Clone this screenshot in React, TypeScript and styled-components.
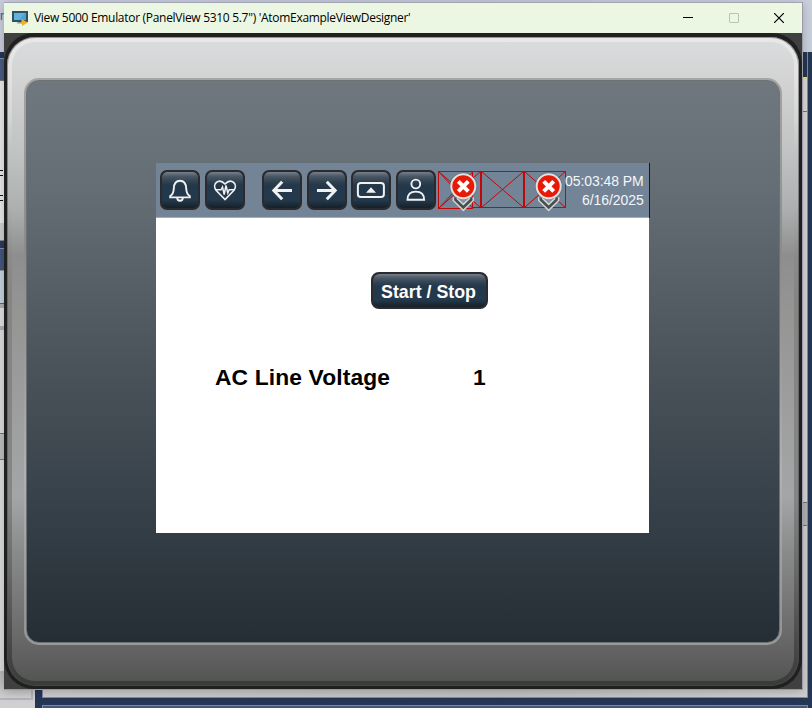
import React from "react";
import styled, { createGlobalStyle } from "styled-components";

const GlobalStyle = createGlobalStyle`
  * { box-sizing: border-box; }
  html, body { margin: 0; padding: 0; overflow: hidden; }
`;

const Desktop = styled.div`
  position: relative;
  width: 812px;
  height: 708px;
  overflow: hidden;
  display: flex;
  flex-direction: column;
  background: #253754;
`;

const TopBand = styled.div`
  flex: 0 0 52px;
  background: linear-gradient(90deg, #c9cddd, #c4c9dc 60%, #cbd0dd);
  color: #2a63a0;
  font: 12px/32px "Liberation Sans", sans-serif;
`;

const Workspace = styled.div`
  flex: 1;
  display: flex;
  min-height: 0;
`;

const LeftRail = styled.div`
  flex: 0 0 35px;
  display: flex;
  flex-direction: column;
  background: #d0d0d1;
`;

const Segment = styled.div<{ $h: number; $bg: string; $line?: string }>`
  flex: 0 0 ${(p) => p.$h}px;
  background: ${(p) => p.$bg};
  border-top: ${(p) => (p.$line ? `1px solid ${p.$line}` : "0")};
  overflow: hidden;
`;

const Stub = styled.div<{ $mt: number }>`
  width: 3px;
  height: 6px;
  margin-top: ${(p) => p.$mt}px;
  border-top: 1px solid #111;
  border-bottom: 1px solid #111;
`;

const RailBox = styled.div`
  flex: 0 0 29px;
  width: 33px;
  border: 1px solid #b5b5bf;
  border-width: 2px 2px 2px 0;
  background: linear-gradient(#b8b8b8, #d0d0d0);
`;

const Editor = styled.div`
  flex: 1;
  display: flex;
  flex-direction: column;
  padding: 0 0 0 7px;
  background: #253754;
`;

const EditorRow = styled.div`
  flex: 0 0 646px;
  display: flex;
  justify-content: flex-end;
  border-bottom: 1px solid #7c8aa8;
  border-left: 1px solid #7c8aa8;
  background: linear-gradient(90deg, #cfcfcf, #c4c4c4 60%, #d2d2d2);
  margin-right: 4px;
`;

const EditorEdge = styled.div`
  width: 6px;
  display: flex;
  flex-direction: column;
  border-right: 1px solid #7f8ba6;
`;

const Footer = styled.div`
  flex: 1;
  margin: 7px 4px 0 0;
  border: 1px solid #7788a8;
  border-bottom: 0;
  background: #44577c;
`;

const Window = styled.main`
  position: absolute;
  left: 4px;
  top: 2px;
  width: 799px;
  height: 688px;
  display: flex;
  flex-direction: column;
  border-top: 1px solid #a2a5b2;
  border-right: 1px solid #9c9da8;
  border-bottom: 1px solid #999;
  box-shadow: 0 2px 10px rgba(0, 0, 0, 0.22);
`;

const TitleBar = styled.header`
  flex: 0 0 30px;
  display: flex;
  align-items: center;
  padding-left: 8px;
  background: #ebf7e3;
`;

const Title = styled.h1`
  flex: 1;
  margin: 0 0 0 6px;
  font: 400 12px/30px "Open Sans", "Noto Sans", sans-serif;
  letter-spacing: -0.3px;
  white-space: nowrap;
  color: #000;
`;

const WindowControls = styled.div`
  display: flex;
  height: 30px;
`;

const ControlButton = styled.button<{ $muted?: boolean }>`
  width: 45.5px;
  height: 29px;
  padding: 0;
  border: 0;
  background: none;
  color: ${(p) => (p.$muted ? "#b9c4b4" : "#000")};
  display: grid;
  place-items: center;
`;

const Frame = styled.div`
  flex: 1;
  display: flex;
  background: #404040;
`;

const Housing = styled.div`
  flex: 1;
  display: flex;
  padding: 4px 3px 3px;
  border-radius: 30px;
  background: #202020;
`;

const Rim = styled.div`
  flex: 1;
  display: flex;
  padding: 5px 5px 5px 5px;
  border-radius: 28px;
  box-shadow: inset 0 0 0 1px rgba(80, 80, 80, 0.55);
  background: linear-gradient(
    #e8e8e8 0,
    #e2e2e2 40px,
    #d4d5d5 80px,
    #c2c3c3 113px,
    #afb0b0 168px,
    #8b8b8b 218px,
    #858585 260px,
    #848484 360px,
    #858585 460px,
    #666 540px,
    #444 620px,
    #393b39 100%
  );
`;

const Bezel = styled.div`
  flex: 1;
  display: flex;
  padding: 36px 12px;
  border-radius: 23px;
  background: linear-gradient(
    #dadbdd 0,
    #d2d3d2 38px,
    #c1c3c4 108px,
    #adaeb0 168px,
    #8d8e8d 214px,
    #959694 270px,
    #9c9d9c 360px,
    #a4a5a7 454px,
    #898b8a 510px,
    #6b6b6b 590px,
    #535553 100%
  );
`;

const Recess = styled.div`
  flex: 1;
  display: flex;
  padding: 2px;
  border-radius: 15px;
  background: linear-gradient(#a5a5a3, #9a9b9b 12%, #8a8b8c 30%, #969798 45%, #b0b1b1 70%, #939494 95%, #999b99);
`;

const Glass = styled.div`
  flex: 1;
  display: flex;
  justify-content: flex-start;
  padding: 82px 0 0 129px;
  border-radius: 13px;
  border: 1px solid #6d7375;
  background: linear-gradient(#70787f, #646d74 20%, #4b545b 50%, #353f47 78%, #252e35);
`;

const Screen = styled.section`
  width: 493px;
  height: 370px;
  display: flex;
  flex-direction: column;
  background: #fff;
  font-family: "Liberation Sans", Arial, sans-serif;
`;

const Toolbar = styled.nav`
  flex: 0 0 55px;
  height: 55px;
  display: flex;
  align-items: flex-start;
  padding: 7px 5px 0 4.3px;
  background: #738497;
  border-bottom: 1px solid #a3aebb;
  box-shadow: 1px 0 0 #101820;
`;

const glossy = `
  border: 2px solid #2b2b2f;
  background: linear-gradient(#75808b 0, #4a5765 12%, #2e4050 28%, #24384b 38%, #24394d 78%, #1b2935 92%, #151f29 100%) padding-box, #2b2b2f;
`;

const ToolButton = styled.button<{ $gap?: number }>`
  flex: 0 0 40px;
  height: 40px;
  margin: 0 0 0 ${(p) => p.$gap ?? 4.5}px;
  padding: 0;
  display: grid;
  place-items: center;
  border-radius: 7px;
  color: #f1f1f1;
  ${glossy}
`;

const Faults = styled.div`
  flex: 0 0 129px;
  margin-left: 1.7px;
  height: 46px;
`;

const Clock = styled.div`
  flex: 1;
  text-align: right;
  white-space: nowrap;
  font-size: 14px;
  line-height: 19px;
  letter-spacing: -0.08px;
  margin: 1.5px 0.4px 0 -8px;
  color: #f4f6f8;
`;

const Content = styled.div`
  flex: 1;
  display: flex;
  flex-direction: column;
`;

const StartStop = styled.button`
  width: 117px;
  height: 37px;
  margin: 54px 0 0 215px;
  padding: 2px 2px 0 0;
  border-radius: 8px;
  color: #fff;
  font: 700 17.8px/32px "Liberation Sans", Arial, sans-serif;
  white-space: nowrap;
  ${glossy}
`;

const Reading = styled.div`
  display: flex;
  margin: 54px 0 0 59px;
  font-size: 22.8px;
  line-height: 28px;
  font-weight: 700;
  letter-spacing: 0.13px;
  color: #000;
  white-space: nowrap;
`;

const ReadingLabel = styled.span`
  width: 258px;
`;

const AppIcon = () => (
  <svg width="16" height="16" viewBox="0 0 16 16">
    <rect x="0" y="1" width="16" height="11" fill="#34505f" />
    <rect x="2" y="3" width="12" height="7" fill="#46a5d6" />
    <path d="M2 3H13L7 10H2Z" fill="#5fb4de" />
    <path d="M6 12H10L11 13.500H4.500Z" fill="#8d9da2" />
    <path d="M9.500 9L16 12.500L10 16V13.500H9.500Z" fill="#e9b32a" />
  </svg>
);

const line = { fill: "none", stroke: "currentColor" } as const;

const Bell = () => (
  <svg width="24" height="24" viewBox="0 0 24 24" {...line} strokeWidth="1.9">
    <path d="M2.200 19.400H21.800V18C19 16.500 18.400 14.500 18.200 10.500C18 5.500 15.600 2.700 12 2.700S6 5.500 5.800 10.500C5.600 14.500 5 16.500 2.200 18Z" />
    <path d="M9.200 20C9.300 23.600 14.700 23.600 14.800 20" />
  </svg>
);

const Heartbeat = () => (
  <svg width="24" height="24" viewBox="0 0 24 24" {...line} strokeWidth="1.7">
    <path d="M12 21.500L3 12.300C-1.300 6.500 5.500-0.700 12 6C18.500-0.700 25.300 6.500 21 12.300Z" />
    <path d="M3 11.800H8L9.500 9L11.200 16.500L13 7.500L14.800 15L16.200 11.800H21" strokeWidth="1.500" />
  </svg>
);

const Arrow = ({ right }: { right?: boolean }) => (
  <svg width="24" height="24" viewBox="0 0 24 24" {...line} strokeWidth="3">
    <path d={right ? "M2 12.500H20M11.800 3.700L20.200 12.500L11.800 21.300" : "M22 12.500H4M12.200 3.700L3.800 12.500L12.200 21.300"} />
  </svg>
);

const Keyboard = () => (
  <svg width="30" height="20" viewBox="0 0 30 20" {...line} strokeWidth="2">
    <rect x="1.900" y="3" width="26" height="14" rx="2.800" />
    <path d="M10 12.800L15 7.300L20 12.800Z" fill="currentColor" stroke="none" />
  </svg>
);

const Person = () => (
  <svg width="24" height="26" viewBox="0 0 24 26" {...line} strokeWidth="1.900">
    <circle cx="11.800" cy="7" r="4.400" />
    <path d="M3.500 22.800C3.500 17.300 6.800 14.600 11.800 14.600S20.100 17.300 20.100 22.800Z" />
  </svg>
);

const Alert = ({ x }: { x: number }) => (
  <g transform={`translate(${x} 16.300)`}>
    <circle r="14" fill="#46515d" opacity="0.2" />
    <path d="M-10.700 11V14.500L0 25.200L10.700 14.500V11Z" fill="#d2d3d4" />
    <path d="M-9.200 11V14L0 23L9.200 14V11Z" fill="#484e50" />
    <path d="M-6.500 12L0 18.300L6.500 12" fill="#8593a2" stroke="#d8d9da" strokeWidth="1.400" />
    <circle r="12" fill="#e81a05" stroke="#e1e1e1" strokeWidth="2" />
    <path d="M-5 -5L5 5M5 -5L-5 5" stroke="#fff" strokeWidth="4" />
  </g>
);

const FaultStrip = () => (
  <svg width="129" height="46" viewBox="0 0 129 46" display="block">
    <g fill="none" stroke="#c00808" strokeWidth="1">
      <path d="M0.500 1.500L35 38.500M35 1.500L0.500 38.500M0.500 1.500L42.500 37.500M42.500 1.500L0.500 38.500" />
      <path d="M43.500 1.500L85.500 37.500M85.500 1.500L43.500 37.500M86.500 1.500L127.500 37.500M127.500 1.500L86.500 37.500" />
      <path d="M0.500 1.500H34.500V38.500H0.500Z" />
      <path d="M34.500 1.500H127.500V37.500H34.500" />
      <path d="M43 1.500V38M86 1.500V38" strokeWidth="2" />
    </g>
    <Alert x={25.3} />
    <Alert x={110.7} />
  </svg>
);

export default function App() {
  return (
    <>
      <GlobalStyle />
      <Desktop>
        <TopBand>r</TopBand>
        <Workspace>
          <LeftRail>
            <Segment $h={6} $bg="#22365a" />
            <Segment $h={22} $bg="#4a5b82" $line="#8290ad" />
            <Segment $h={143} $bg="#e9e9ea" $line="#777">
              <Stub $mt={89} />
              <Stub $mt={19} />
            </Segment>
            <Segment $h={17} $bg="#cecfd1" />
            <Segment $h={8} $bg="#273b63" $line="#8a8a90" />
            <Segment $h={22} $bg="#44557d" $line="#8290ad" />
            <Segment $h={33} $bg="#c5d2e0" $line="#999" />
            <Segment $h={5} $bg="#b0b1b3" $line="#666" />
            <Segment $h={18} $bg="#dfe0e1" />
            <Segment $h={4} $bg="#b0b0b0" />
            <Segment $h={103} $bg="#dcddde" />
            <Segment $h={26} $bg="#bdbebf" $line="#777" />
            <Segment $h={212} $bg="#dcddde" $line="#777" />
            <RailBox />
          </LeftRail>
          <Editor>
            <EditorRow>
              <EditorEdge>
                <Segment $h={25} $bg="#253754" />
                <Segment $h={2} $bg="#f2df83" />
                <Segment $h={32} $bg="#dcdcdc" />
                <Segment $h={391} $bg="#d8d9d7" $line="#777" />
                <Segment $h={23} $bg="#b4b5b6" $line="#777" />
                <Segment $h={172} $bg="#d0d0ce" $line="#777" />
              </EditorEdge>
            </EditorRow>
            <Footer />
          </Editor>
        </Workspace>

        <Window>
          <TitleBar>
            <AppIcon />
            <Title>View 5000 Emulator (PanelView 5310 5.7") 'AtomExampleViewDesigner'</Title>
            <WindowControls>
              <ControlButton aria-label="Minimize">
                <svg width="10" height="10"><path d="M0 4.500H10" stroke="currentColor" /></svg>
              </ControlButton>
              <ControlButton $muted aria-label="Maximize">
                <svg width="10" height="10"><rect x="0.500" y="0.500" width="9" height="9" rx="0.500" fill="none" stroke="currentColor" /></svg>
              </ControlButton>
              <ControlButton aria-label="Close">
                <svg width="10" height="10"><path d="M0 0L10 10M10 0L0 10" stroke="currentColor" strokeWidth="1.200" /></svg>
              </ControlButton>
            </WindowControls>
          </TitleBar>
          <Frame>
            <Housing>
              <Rim>
                <Bezel>
                  <Recess>
                    <Glass>
                      <Screen>
                        <Toolbar>
                          <ToolButton $gap={0} aria-label="Alarms"><Bell /></ToolButton>
                          <ToolButton aria-label="Diagnostics"><Heartbeat /></ToolButton>
                          <ToolButton $gap={17.7} aria-label="Back"><Arrow /></ToolButton>
                          <ToolButton aria-label="Forward"><Arrow right /></ToolButton>
                          <ToolButton aria-label="Keyboard"><Keyboard /></ToolButton>
                          <ToolButton aria-label="User"><Person /></ToolButton>
                          <Faults><FaultStrip /></Faults>
                          <Clock>
                            <div>05:03:48 PM</div>
                            <div>6/16/2025</div>
                          </Clock>
                        </Toolbar>
                        <Content>
                          <StartStop>Start / Stop</StartStop>
                          <Reading>
                            <ReadingLabel>AC Line Voltage</ReadingLabel>
                            <span>1</span>
                          </Reading>
                        </Content>
                      </Screen>
                    </Glass>
                  </Recess>
                </Bezel>
              </Rim>
            </Housing>
          </Frame>
        </Window>
      </Desktop>
    </>
  );
}
